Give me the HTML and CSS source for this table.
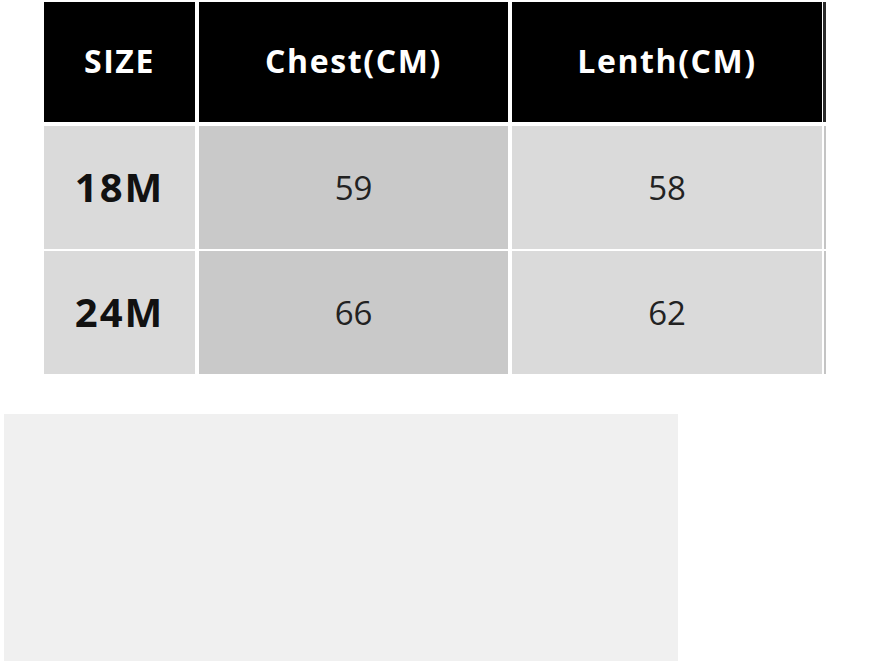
FILE: index.html
```html
<!DOCTYPE html>
<html>
<head>
<meta charset="utf-8">
<link rel="stylesheet" href="styles.css">
</head>
<body>
<div class="size-table">
  <div class="row head">
    <div class="cell">SIZE</div>
    <div class="cell">Chest(CM)</div>
    <div class="cell last">Lenth(CM)</div>
  </div>
  <div class="body-rows">
    <div class="row data">
      <div class="cell size">18M</div>
      <div class="cell mid">59</div>
      <div class="cell last">58</div>
    </div>
    <div class="row data">
      <div class="cell size">24M</div>
      <div class="cell mid">66</div>
      <div class="cell last">62</div>
    </div>
  </div>
</div>
<div class="panel"></div>
</body>
</html>
```
FILE: styles.css
```css
html, body {
  margin: 0;
  padding: 0;
  background: #fff;
  overflow: hidden;
}
body {
  font-family: "Open Sans", "Liberation Sans", sans-serif;
}
.size-table {
  margin: 2px 0 0 44px;
  display: flex;
  flex-direction: column;
  gap: 4px;
}
.body-rows {
  display: flex;
  flex-direction: column;
  gap: 2px;
}
.row {
  display: grid;
  grid-template-columns: 151px 309px 310px;
  column-gap: 4px;
}
.cell {
  display: flex;
  align-items: center;
  justify-content: center;
}
.head {
  height: 120px;
}
.head .cell {
  background: #000;
  color: #fff;
  font-weight: 700;
  font-size: 32px;
  letter-spacing: 1.6px;
  padding-bottom: 3px;
}
.head .last {
  box-shadow: 1px 0 0 #fff, 4px 0 0 #2a2a2a;
}
.data {
  height: 123px;
}
.data .cell {
  background: #dadada;
  color: #222;
  font-size: 33px;
}
.data .cell.mid {
  background: #c9c9c9;
}
.data .cell.size {
  font-weight: 700;
  font-size: 40px;
  letter-spacing: 2px;
  color: #111;
  padding-bottom: 3px;
}
.data .last {
  box-shadow: 2px 0 0 #fff, 4px 0 0 #c4c4c4;
}
.panel {
  margin: 40px 0 0 4px;
  width: 674px;
  height: 247px;
  background: #f0f0f0;
}
```
